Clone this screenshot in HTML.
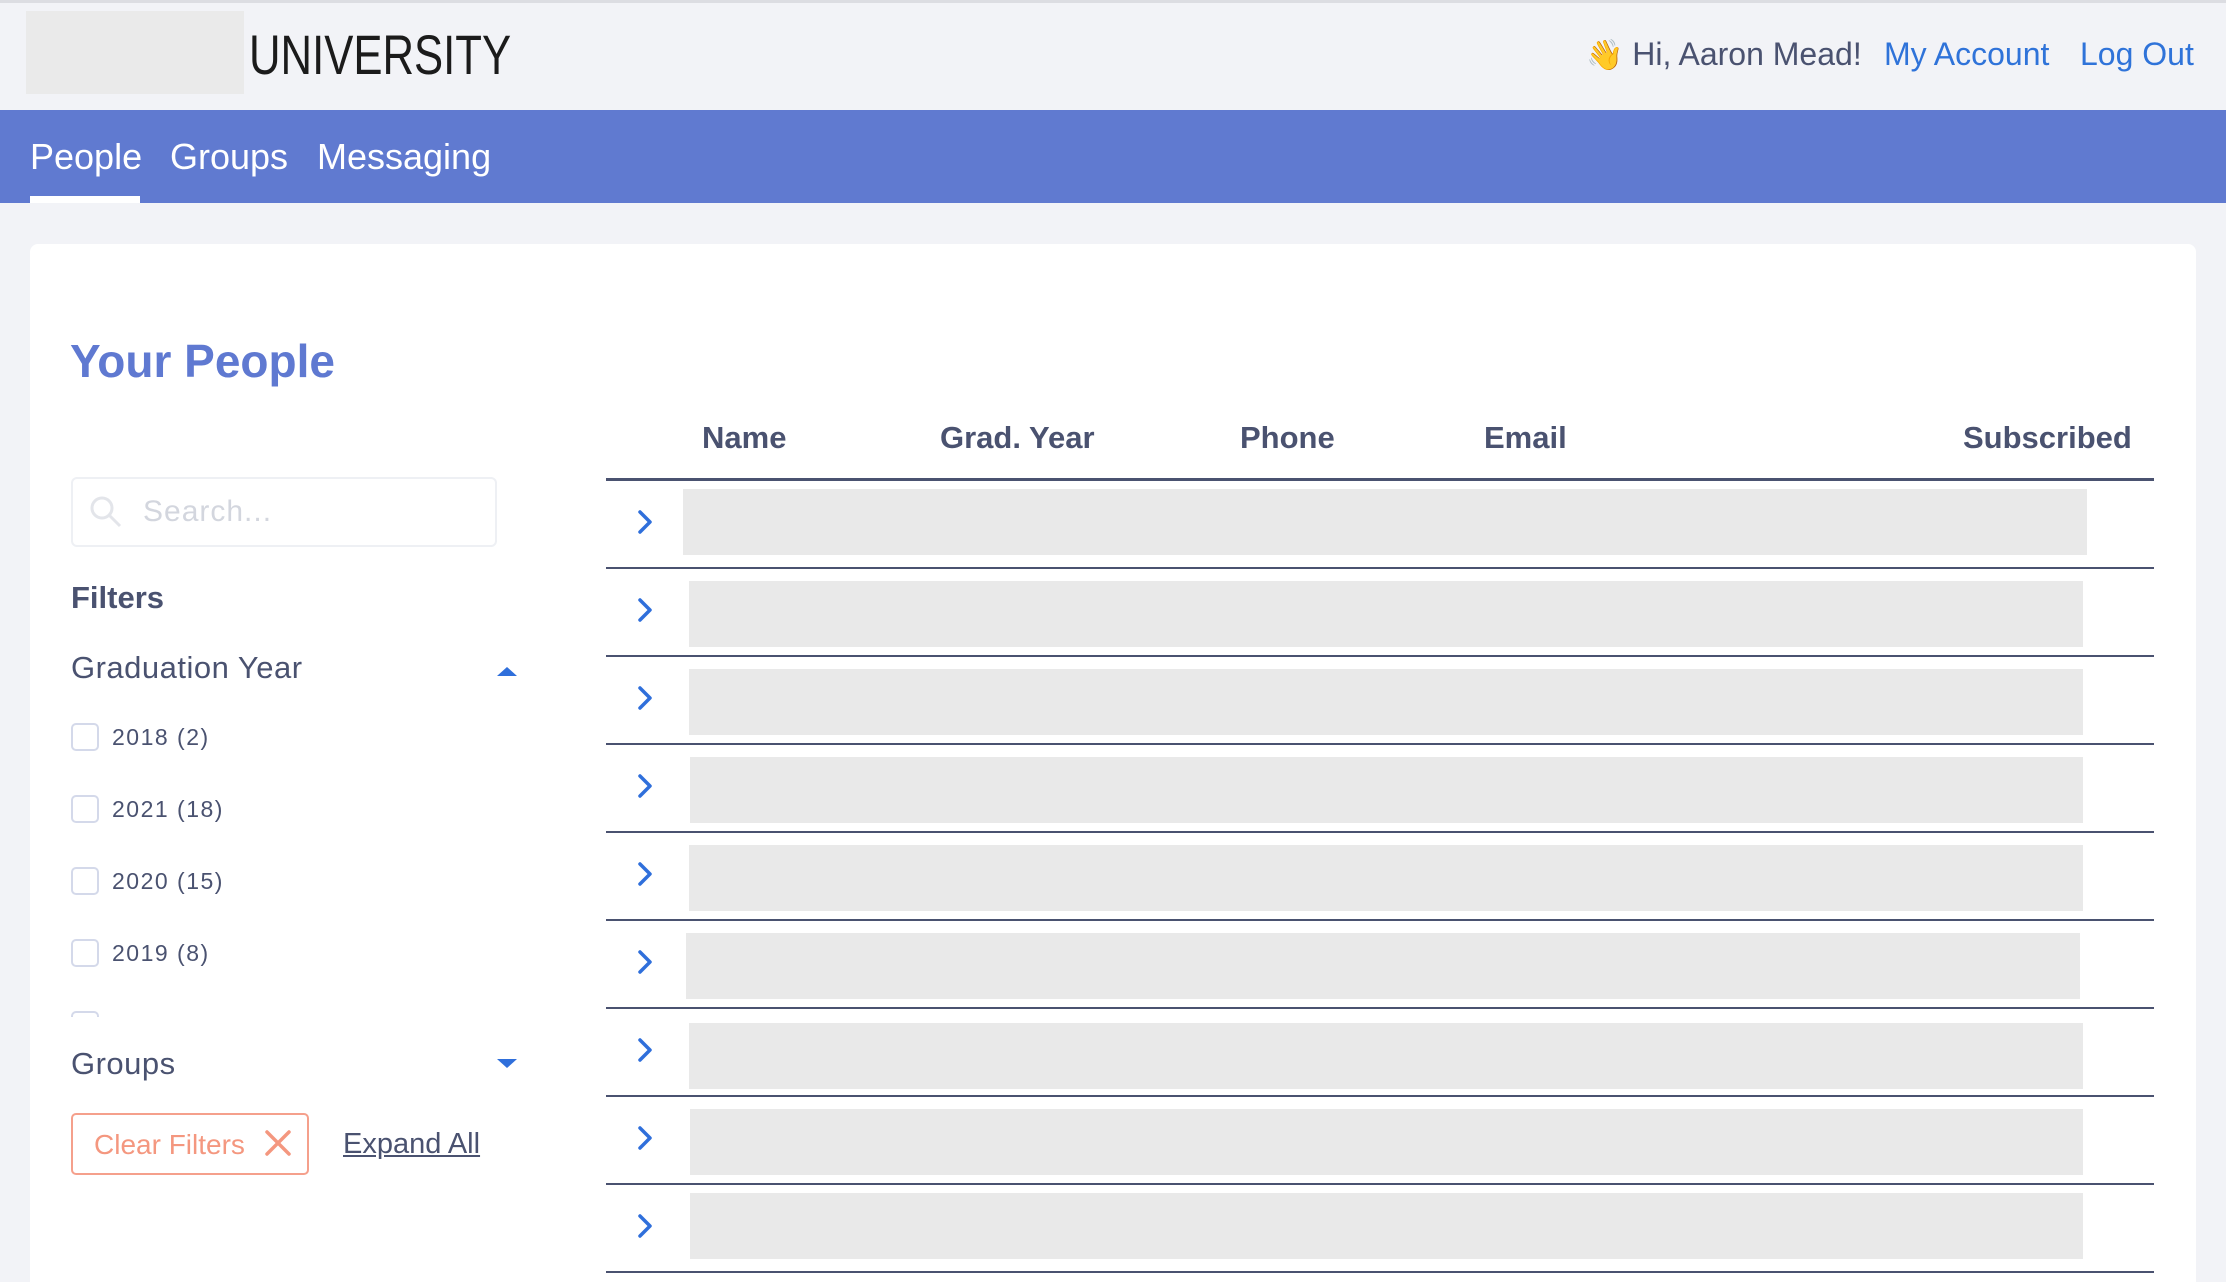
<!DOCTYPE html>
<html><head><meta charset="utf-8"><style>
*{margin:0;padding:0;box-sizing:border-box}
html{width:2226px;height:1282px;overflow:hidden}
body{width:2226px;height:1282px;overflow:hidden;background:#f2f3f7;font-family:"Liberation Sans",sans-serif;color:#4a5270;position:relative}
.a{position:absolute;white-space:nowrap}
.topline{left:0;top:0;width:2226px;height:3px;background:#dcdde2}
.logo{left:26px;top:11px;width:218px;height:83px;background:#eaeaea}
.univ{left:249px;top:22px;font-size:56px;color:#1b1b1b;transform:scaleX(0.78);transform-origin:left}
.hi{left:1586px;top:36px;font-size:32px;color:#4a5270}
.lnk{top:36px;font-size:32px;color:#2f73d9}
.nav{left:0;top:110px;width:2226px;height:93px;background:#607ad0}
.nv{top:136px;font-size:36px;color:#fff}
.ul{left:30px;top:196px;width:110px;height:7px;background:#fff}
.card{left:30px;top:244px;width:2166px;height:1038px;background:#fff;border-radius:8px 8px 0 0}
.h1{left:70px;top:334px;font-size:46px;font-weight:bold;color:#5f79d1}
.th{top:420px;font-size:31px;font-weight:bold;color:#4a5270}
.hl{left:606px;top:478px;width:1548px;height:3px;background:#4a5270}
.rl{left:606px;width:1548px;height:2px;background:#4a5270}
.box{background:#e9e9e9}
.search{left:71px;top:477px;width:426px;height:70px;border:2px solid #eef0f4;border-radius:6px}
.ph{left:143px;top:495px;font-size:30px;color:#d3d6de;letter-spacing:1px}
.cb{left:71px;width:28px;height:28px;border:2.5px solid #d4d9ea;border-radius:5px}
.cl{left:112px;font-size:23px;letter-spacing:1.5px;color:#4a5270}
.btn{left:71px;top:1113px;width:238px;height:62px;border:2px solid #f5a08c;border-radius:5px}
</style></head><body>
<div class="a topline"></div>
<div class="a logo"></div>
<div class="a univ">UNIVERSITY</div>
<div class="a hi"><span style="font-size:30px">👋</span> Hi, Aaron Mead!</div>
<div class="a lnk" style="left:1884px">My Account</div>
<div class="a lnk" style="left:2080px">Log Out</div>
<div class="a nav"></div>
<div class="a nv" style="left:30px">People</div>
<div class="a nv" style="left:170px">Groups</div>
<div class="a nv" style="left:317px">Messaging</div>
<div class="a ul"></div>
<div class="a card"></div>
<div class="a h1">Your People</div>
<div class="a th" style="left:702px">Name</div>
<div class="a th" style="left:940px">Grad. Year</div>
<div class="a th" style="left:1240px">Phone</div>
<div class="a th" style="left:1484px">Email</div>
<div class="a th" style="left:1963px">Subscribed</div>
<div class="a hl"></div>

<div class="a box" style="left:683px;top:489px;width:1404px;height:66px"></div>
<div class="a box" style="left:689px;top:581px;width:1394px;height:66px"></div>
<div class="a box" style="left:689px;top:669px;width:1394px;height:66px"></div>
<div class="a box" style="left:690px;top:757px;width:1393px;height:66px"></div>
<div class="a box" style="left:689px;top:845px;width:1394px;height:66px"></div>
<div class="a box" style="left:686px;top:933px;width:1394px;height:66px"></div>
<div class="a box" style="left:689px;top:1023px;width:1394px;height:66px"></div>
<div class="a box" style="left:690px;top:1109px;width:1393px;height:66px"></div>
<div class="a box" style="left:690px;top:1193px;width:1393px;height:66px"></div>

<div class="a rl" style="top:567px"></div>
<div class="a rl" style="top:655px"></div>
<div class="a rl" style="top:743px"></div>
<div class="a rl" style="top:831px"></div>
<div class="a rl" style="top:919px"></div>
<div class="a rl" style="top:1007px"></div>
<div class="a rl" style="top:1095px"></div>
<div class="a rl" style="top:1183px"></div>
<div class="a rl" style="top:1271px"></div>

<svg class="a" style="left:0;top:0" width="2226" height="1282">
<g fill="none" stroke="#2f6fdb" stroke-width="3.5" stroke-linecap="round" stroke-linejoin="round">
<path d="M640 512l10 10-10 10"/>
<path d="M640 600l10 10-10 10"/>
<path d="M640 688l10 10-10 10"/>
<path d="M640 776l10 10-10 10"/>
<path d="M640 864l10 10-10 10"/>
<path d="M640 952l10 10-10 10"/>
<path d="M640 1040l10 10-10 10"/>
<path d="M640 1128l10 10-10 10"/>
<path d="M640 1216l10 10-10 10"/>
</g>
<path d="M497 676l10-9 10 9z" fill="#2f6fdb"/>
<path d="M497 1059l10 9 10-9z" fill="#2f6fdb"/>
<g fill="none" stroke="#e3e5ea" stroke-width="3"><circle cx="102" cy="508" r="10"/><path d="M110 516l10 10"/></g>
<g stroke="#f4977f" stroke-width="3.5" stroke-linecap="round"><path d="M267 1132l22 22M289 1132l-22 22"/></g>
</svg>

<div class="a search"></div>
<div class="a ph">Search...</div>
<div class="a" style="left:71px;top:580px;font-size:31px;font-weight:bold">Filters</div>
<div class="a" style="left:71px;top:650px;font-size:31px;letter-spacing:0.5px">Graduation Year</div>
<div class="a cb" style="top:723px"></div><div class="a cl" style="top:724px">2018 (2)</div>
<div class="a cb" style="top:795px"></div><div class="a cl" style="top:796px">2021 (18)</div>
<div class="a cb" style="top:867px"></div><div class="a cl" style="top:868px">2020 (15)</div>
<div class="a cb" style="top:939px"></div><div class="a cl" style="top:940px">2019 (8)</div>
<div class="a" style="left:71px;top:1011px;width:28px;height:6px;border:2.5px solid #d4d9ea;border-bottom:none;border-radius:5px 5px 0 0"></div>
<div class="a" style="left:71px;top:1046px;font-size:31px;letter-spacing:0.5px">Groups</div>
<div class="a btn"></div>
<div class="a" style="left:94px;top:1129px;font-size:28px;color:#f4977f">Clear Filters</div>
<div class="a" style="left:343px;top:1128px;font-size:29px;text-decoration:underline">Expand All</div>
</body></html>
